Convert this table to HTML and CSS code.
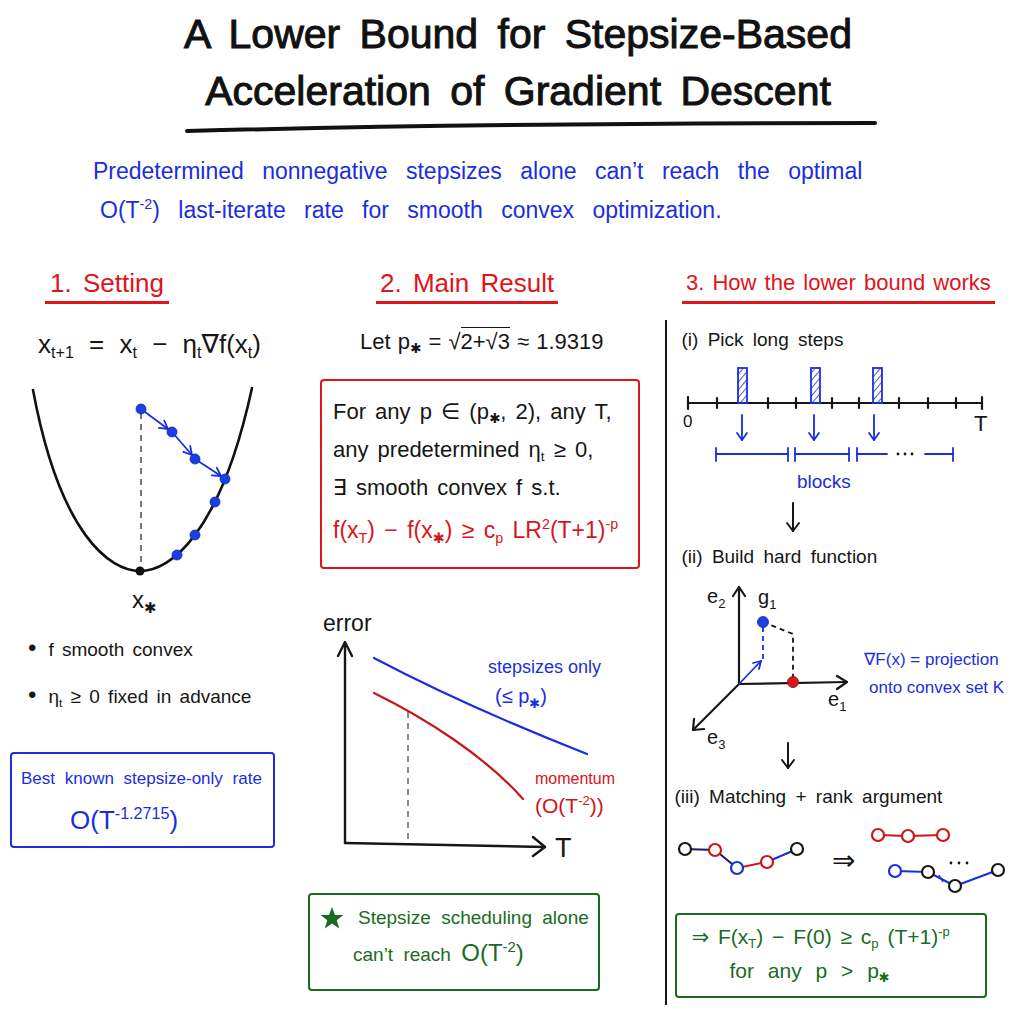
FILE: index.html
```html
<!DOCTYPE html>
<html>
<head>
<meta charset="utf-8">
<title>A Lower Bound for Stepsize-Based Acceleration of Gradient Descent</title>
<link rel="stylesheet" href="styles.css">
</head>
<body>
<div class="page">
  <header class="header">
    <h1 class="title">A Lower Bound for Stepsize-Based<br>Acceleration of Gradient Descent</h1>
    <svg class="title-rule" width="694" height="14" viewBox="0 0 694 14">
      <path d="M2,11 C200,6 450,3 690,3" fill="none" stroke="#111" stroke-width="4" stroke-linecap="round"/>
    </svg>
  </header>

  <p class="lead">Predetermined nonnegative stepsizes alone can’t reach the optimal<br><span class="lead-2">O(T<sup>-2</sup>) last-iterate rate for smooth convex optimization.</span></p>

  <main class="cols">
    <!-- Column 1 -->
    <section class="col">
      <h2 class="heading heading-1">1. Setting</h2>
      <div class="formula">x<sub>t+1</sub> = x<sub>t</sub> − η<sub>t</sub>∇f(x<sub>t</sub>)</div>
      <svg class="bowl" width="260" height="200" viewBox="0 0 260 200">
        <path d="M13,5 C40,150 90,186 120,186 C150,186 200,150 232,3" fill="none" stroke="#111" stroke-width="2.6" stroke-linecap="round"/>
        <line x1="121" y1="28" x2="121" y2="183" stroke="#555" stroke-width="1.6" stroke-dasharray="6 5"/>
        <g stroke="#1a2ee0" stroke-width="1.8" fill="none" stroke-linecap="round" stroke-linejoin="round">
          <line x1="121" y1="24" x2="148" y2="44"/>
          <polyline points="138.9,42.8 148,44 144.3,35.6"/>
          <line x1="152" y1="47" x2="172" y2="70"/>
          <polyline points="163.4,66.8 172,70 170.2,61"/>
          <line x1="175" y1="74" x2="201" y2="91"/>
          <polyline points="191.8,90.3 201,91 196.8,82.8"/>
        </g>
        <g fill="#1b3fe2" stroke="#0d2aa6" stroke-width="0.8">
          <circle cx="121" cy="24" r="5"/>
          <circle cx="152" cy="47" r="5"/>
          <circle cx="175" cy="74" r="5"/>
          <circle cx="205" cy="94" r="5"/>
          <circle cx="195" cy="117" r="5"/>
          <circle cx="175" cy="150" r="5"/>
          <circle cx="157" cy="170" r="5"/>
        </g>
        <circle cx="120" cy="186" r="4.5" fill="#111"/>
      </svg>
      <div class="xstar">x<sub>✱</sub></div>
      <ul class="bullets">
        <li>f smooth convex</li>
        <li>η<sub>t</sub> ≥ 0 fixed in advance</li>
      </ul>
      <div class="box box-blue">
        <div class="box-blue-1">Best known stepsize-only rate</div>
        <div class="box-blue-2">O(T<sup>-1.2715</sup>)</div>
      </div>
    </section>

    <!-- Column 2 -->
    <section class="col">
      <h2 class="heading heading-2">2. Main Result</h2>
      <div class="let">Let p<sub>✱</sub> = <span class="rad">√<span class="rad-body">2+<span class="rad">√<span class="rad-body">3</span></span></span></span> ≈ 1.9319</div>
      <div class="box box-red">
        <div class="line">For any p ∈ (p<sub>✱</sub>, 2), any T,</div>
        <div class="line">any predetermined η<sub>t</sub> ≥ 0,</div>
        <div class="line">∃ smooth convex f s.t.</div>
        <div class="line line-red">f(x<sub>T</sub>) − f(x<sub>✱</sub>) ≥ c<sub>p</sub> LR<sup>2</sup>(T+1)<sup>-p</sup></div>
      </div>
      <svg class="diagram graph" width="310" height="264" viewBox="0 0 310 264">
        <text x="8" y="25" font-size="23" fill="#161616">error</text>
        <g stroke="#161616" stroke-width="2.4" fill="none" stroke-linecap="round" stroke-linejoin="round">
          <line x1="30" y1="237" x2="30" y2="37"/>
          <polyline points="23,50 30,36 37,50"/>
          <line x1="30" y1="237" x2="230" y2="241"/>
          <polyline points="218,231 230,241 218,250"/>
        </g>
        <text x="240" y="251" font-size="27" fill="#161616">T</text>
        <line x1="93" y1="106" x2="93" y2="238" stroke="#666" stroke-width="1.5" stroke-dasharray="6 5"/>
        <path d="M59,52 Q150,100 272,148" fill="none" stroke="#1a2ee0" stroke-width="2.2" stroke-linecap="round"/>
        <path d="M59,87 C110,112 170,150 208,193" fill="none" stroke="#c8141a" stroke-width="2.2" stroke-linecap="round"/>
        <text x="173" y="67" font-size="18" fill="#1a2ee0">stepsizes only</text>
        <text x="180" y="97" font-size="20" fill="#1a2ee0">(≤ p<tspan dy="5" font-size="13">✱</tspan><tspan dy="-5">)</tspan></text>
        <text x="220" y="178" font-size="16" fill="#d0141a">momentum</text>
        <text x="220" y="207" font-size="21" fill="#d0141a">(O(T<tspan dy="-8" font-size="13">-2</tspan><tspan dy="8">))</tspan></text>
      </svg>
      <div class="box box-green box-green-2">
        <div class="g-line g-line-1">
          <svg class="star" width="24" height="24" viewBox="0 0 24 24"><polygon points="12,1 15,9 23.5,9 16.7,14.2 19.3,22.5 12,17.4 4.7,22.5 7.3,14.2 0.5,9 9,9" fill="#1a6b22"/></svg>
          <span>Stepsize scheduling alone</span>
        </div>
        <div class="g-line g-line-2">can’t reach <span class="big">O(T<sup>-2</sup>)</span></div>
      </div>
    </section>

    <!-- Column 3 -->
    <section class="col">
      <h2 class="heading heading-3">3. How the lower bound works</h2>
      <div class="how">
        <div class="step">(i) Pick long steps</div>
        <svg class="diagram timeline" width="320" height="180" viewBox="0 0 320 180">
          <defs>
            <pattern id="hatch" width="5" height="5" patternUnits="userSpaceOnUse" patternTransform="rotate(40)">
              <line x1="0" y1="0" x2="0" y2="5" stroke="#1a2ee0" stroke-width="1.6"/>
            </pattern>
          </defs>
          <g stroke="#161616" stroke-width="2.2" stroke-linecap="round">
            <line x1="6" y1="48" x2="300" y2="48"/>
            <line x1="6" y1="42" x2="6" y2="54"/>
            <line x1="35" y1="43" x2="35" y2="53"/>
            <line x1="86" y1="43" x2="86" y2="53"/>
            <line x1="114" y1="43" x2="114" y2="53"/>
            <line x1="150" y1="43" x2="150" y2="53"/>
            <line x1="177" y1="43" x2="177" y2="53"/>
            <line x1="217" y1="43" x2="217" y2="53"/>
            <line x1="246" y1="43" x2="246" y2="53"/>
            <line x1="274" y1="43" x2="274" y2="53"/>
            <line x1="300" y1="42" x2="300" y2="54"/>
          </g>
          <g fill="url(#hatch)" stroke="#1a2ee0" stroke-width="1.8">
            <rect x="56" y="13" width="9" height="35"/>
            <rect x="129" y="13" width="9" height="35"/>
            <rect x="191" y="13" width="9" height="35"/>
          </g>
          <text x="1" y="72" font-size="17" fill="#161616">0</text>
          <text x="292" y="76" font-size="22" fill="#161616">T</text>
          <g stroke="#1a2ee0" stroke-width="1.8" fill="none" stroke-linecap="round" stroke-linejoin="round">
            <line x1="60" y1="60" x2="60" y2="85"/>
            <polyline points="55,78 60,85 65,78"/>
            <line x1="132" y1="60" x2="132" y2="85"/>
            <polyline points="127,78 132,85 137,78"/>
            <line x1="192" y1="60" x2="192" y2="85"/>
            <polyline points="187,78 192,85 197,78"/>
            <line x1="34" y1="99" x2="106" y2="99"/>
            <line x1="34" y1="93" x2="34" y2="106"/>
            <line x1="106" y1="93" x2="106" y2="106"/>
            <line x1="113" y1="99" x2="167" y2="99"/>
            <line x1="113" y1="93" x2="113" y2="106"/>
            <line x1="167" y1="93" x2="167" y2="106"/>
            <line x1="175" y1="99" x2="205" y2="99"/>
            <line x1="175" y1="93" x2="175" y2="106"/>
            <line x1="243" y1="99" x2="271" y2="99"/>
            <line x1="271" y1="93" x2="271" y2="106"/>
          </g>
          <g fill="#161616">
            <circle cx="216" cy="99" r="1.4"/>
            <circle cx="223" cy="99" r="1.4"/>
            <circle cx="230" cy="99" r="1.4"/>
          </g>
          <text x="115" y="133" font-size="19" fill="#1a2ee0">blocks</text>
          <g stroke="#161616" stroke-width="2" fill="none" stroke-linecap="round" stroke-linejoin="round">
            <line x1="111" y1="148" x2="111" y2="176"/>
            <polyline points="105,168 111,176 117,168"/>
          </g>
        </svg>

        <div class="step step-2">(ii) Build hard function</div>
        <svg class="diagram axes" width="330" height="203" viewBox="0 0 330 203">
          <g stroke="#161616" stroke-width="2.2" fill="none" stroke-linecap="round" stroke-linejoin="round">
            <line x1="57" y1="112" x2="57" y2="15"/>
            <polyline points="51,24 57,15 63,24"/>
            <line x1="57" y1="112" x2="165" y2="110"/>
            <polyline points="155,104 165,110 155,117"/>
            <line x1="57" y1="112" x2="11" y2="158"/>
            <polyline points="22,157 11,158 12,147"/>
          </g>
          <text x="25" y="31" font-size="20" fill="#161616">e<tspan dy="5" font-size="13">2</tspan></text>
          <text x="76" y="32" font-size="20" fill="#161616">g<tspan dy="5" font-size="13">1</tspan></text>
          <text x="146" y="134" font-size="20" fill="#161616">e<tspan dy="5" font-size="13">1</tspan></text>
          <text x="25" y="172" font-size="20" fill="#161616">e<tspan dy="5" font-size="13">3</tspan></text>
          <polyline points="81,50 111,62 111,106" fill="none" stroke="#161616" stroke-width="1.8" stroke-dasharray="5 4"/>
          <line x1="81" y1="55" x2="81" y2="88" stroke="#1a2ee0" stroke-width="1.8" stroke-dasharray="5 4"/>
          <g stroke="#1a2ee0" stroke-width="1.8" fill="none" stroke-linecap="round" stroke-linejoin="round">
            <line x1="57" y1="112" x2="79" y2="89"/>
            <polyline points="71,91 79,89 77,97"/>
          </g>
          <circle cx="81" cy="50" r="5.5" fill="#1b3fe2" stroke="#0d2aa6" stroke-width="0.8"/>
          <circle cx="111" cy="110" r="5.5" fill="#e0141a" stroke="#7a0c0c" stroke-width="0.8"/>
          <text x="182" y="93" font-size="17" fill="#1a2ee0">∇F(x) = projection</text>
          <text x="187" y="121" font-size="17" fill="#1a2ee0">onto convex set K</text>
          <g stroke="#161616" stroke-width="2" fill="none" stroke-linecap="round" stroke-linejoin="round">
            <line x1="106" y1="171" x2="106" y2="196"/>
            <polyline points="100,188 106,196 112,188"/>
          </g>
        </svg>

        <div class="step step-3">(iii) Matching + rank argument</div>
        <svg class="diagram chains" width="340" height="80" viewBox="0 0 340 80">
          <g fill="none" stroke-width="2">
            <line x1="10" y1="34" x2="40" y2="35" stroke="#1c1c55"/>
            <line x1="40" y1="35" x2="62" y2="53" stroke="#1c1c55"/>
            <line x1="62" y1="53" x2="92" y2="47" stroke="#d0141a"/>
            <line x1="92" y1="47" x2="122" y2="34" stroke="#1a2ee0"/>
            <line x1="203" y1="20" x2="233" y2="21" stroke="#d0141a"/>
            <line x1="233" y1="21" x2="268" y2="20" stroke="#d0141a"/>
            <line x1="220" y1="56" x2="253" y2="57" stroke="#1a2ee0"/>
            <line x1="253" y1="57" x2="280" y2="71" stroke="#1a2ee0"/>
            <line x1="280" y1="71" x2="323" y2="55" stroke="#1a2ee0"/>
            <line x1="264" y1="60" x2="268" y2="67" stroke="#1a2ee0" stroke-width="1.4"/>
          </g>
          <g fill="#fff" stroke-width="2.2">
            <circle cx="10" cy="34" r="6" stroke="#161616"/>
            <circle cx="40" cy="35" r="6" stroke="#d0141a"/>
            <circle cx="62" cy="53" r="6" stroke="#1a2ee0"/>
            <circle cx="92" cy="47" r="6" stroke="#d0141a"/>
            <circle cx="122" cy="34" r="6" stroke="#161616"/>
            <circle cx="203" cy="20" r="6" stroke="#d0141a"/>
            <circle cx="233" cy="21" r="6" stroke="#d0141a"/>
            <circle cx="268" cy="20" r="6" stroke="#d0141a"/>
            <circle cx="220" cy="56" r="6" stroke="#1a2ee0"/>
            <circle cx="253" cy="57" r="6" stroke="#161616"/>
            <circle cx="280" cy="71" r="6" stroke="#161616"/>
            <circle cx="323" cy="55" r="6" stroke="#161616"/>
          </g>
          <g fill="#161616">
            <circle cx="276" cy="48" r="1.4"/>
            <circle cx="284" cy="48" r="1.4"/>
            <circle cx="292" cy="48" r="1.4"/>
          </g>
          <text x="157" y="55" font-size="28" fill="#161616">⇒</text>
        </svg>

        <div class="box box-green box-green-3">
          <div class="g-line g-line-3">⇒ F(x<sub>T</sub>) − F(0) ≥ c<sub>p</sub> (T+1)<sup>-p</sup></div>
          <div class="g-line g-line-4">for any p &gt; p<sub>✱</sub></div>
        </div>
      </div>
    </section>
  </main>
</div>
</body>
</html>
```

FILE: styles.css
```css
* {
  box-sizing: border-box;
}

html,
body {
  margin: 0;
  padding: 0;
  background: #ffffff;
}

body {
  font-family: "Liberation Sans", Arial, "DejaVu Sans", sans-serif;
  color: #161616;
}

.page {
  width: 1024px;
  height: 1024px;
  overflow: hidden;
}

sub,
sup {
  line-height: 0;
  font-size: 0.62em;
}

sub {
  vertical-align: -0.32em;
}

sup {
  vertical-align: 0.6em;
}

/* Header */
.header {
  display: flex;
  flex-direction: column;
}

.title {
  margin: 0;
  padding: 6px 0 0 12px;
  font-size: 41px;
  line-height: 57px;
  font-weight: 400;
  text-align: center;
  word-spacing: 8px;
  color: #111111;
  -webkit-text-stroke: 1px #111111;
}

.title-rule {
  display: block;
  margin-left: 185px;
}

.lead {
  margin: 18px 0 0;
  padding-left: 93px;
  font-size: 23px;
  line-height: 39px;
  word-spacing: 12px;
  color: #1a2ee0;
}

.lead-2 {
  padding-left: 7px;
}

/* Columns */
.cols {
  display: grid;
  grid-template-columns: 300px 365px 359px;
}

.col {
  display: flex;
  flex-direction: column;
  align-items: flex-start;
}

.heading {
  margin: 37px 0 0;
  padding: 0 5px 2px;
  font-size: 26px;
  line-height: 32px;
  font-weight: 400;
  color: #e0141a;
  border-bottom: 3px solid #e0141a;
  word-spacing: 4px;
}

.heading-1 {
  margin-left: 45px;
}

.heading-2 {
  margin-left: 76px;
  padding: 0 4px 2px;
}

.heading-3 {
  margin-left: 17px;
  padding: 0 4px 2px;
  font-size: 22px;
  word-spacing: 2px;
}

/* Column 1 */
.formula {
  margin: 22px 0 0 38px;
  font-size: 26px;
  line-height: 36px;
  word-spacing: 8px;
}

.bowl {
  display: block;
  margin: 23px 0 0 20px;
}

.xstar {
  margin: 1px 0 0 132px;
  font-size: 24px;
  line-height: 28px;
}

.bullets {
  list-style: none;
  margin: 21px 0 0;
  padding: 0 0 0 28px;
  font-size: 19px;
  line-height: 30px;
  word-spacing: 3px;
}

.bullets li + li {
  margin-top: 17px;
}

.bullets li::before {
  content: "•";
  font-size: 24px;
  line-height: 0;
  margin-right: 12px;
}

.box {
  border-width: 2.5px;
  border-style: solid;
  border-radius: 4px;
}

.box-blue {
  margin: 40px 0 0 10px;
  width: 265px;
  height: 96px;
  padding: 10px 0 0 9px;
  border-color: #1a2ee0;
  color: #1a2ee0;
}

.box-blue-1 {
  font-size: 17px;
  line-height: 30px;
  word-spacing: 5px;
}

.box-blue-2 {
  padding: 8px 0 0 49px;
  font-size: 26px;
  line-height: 36px;
}

/* Column 2 */
.let {
  margin: 22px 0 0 60px;
  font-size: 22px;
  line-height: 32px;
  word-spacing: 1px;
}

.rad-body {
  border-top: 1.5px solid currentColor;
  padding-top: 1px;
}

.box-red {
  margin: 21px 0 0 20px;
  width: 320px;
  height: 190px;
  padding: 12px 0 0 11px;
  border-color: #e0141a;
}

.box-red .line {
  font-size: 22px;
  line-height: 38px;
  word-spacing: 3px;
}

.box-red .line-red {
  margin-top: 4px;
  color: #d8141a;
  font-size: 23px;
  word-spacing: 3px;
}

.diagram text {
  font-family: "Liberation Sans", Arial, "DejaVu Sans", sans-serif;
}

.graph {
  display: block;
  margin: 37px 0 0 15px;
}

.box-green {
  border-color: #1a6b22;
  color: #1a6b22;
}

.box-green-2 {
  margin: 23px 0 0 8px;
  width: 292px;
  height: 98px;
  padding: 8px 0 0 10px;
}

.g-line {
  font-size: 19px;
  word-spacing: 5px;
}

.g-line-1 {
  display: flex;
  align-items: center;
  gap: 14px;
  height: 30px;
}

.star {
  display: block;
  flex: none;
}

.g-line-2 {
  padding-left: 33px;
  line-height: 40px;
}

.big {
  font-size: 24px;
}

/* Column 3 */
.how {
  margin-top: 16px;
  height: 685px;
  border-left: 2.5px solid #161616;
  padding: 5px 0 0 14.5px;
  display: flex;
  flex-direction: column;
  align-items: flex-start;
}

.step {
  font-size: 19px;
  line-height: 30px;
  word-spacing: 4px;
}

.step-2 {
  margin-top: 7px;
}

.step-3 {
  margin: 7px 0 0 -7px;
}

.timeline,
.axes {
  display: block;
}

.chains {
  display: block;
  margin: 3px 0 0 -7px;
}

.box-green-3 {
  margin: 18px 0 0 -7px;
  width: 312px;
  height: 85px;
  padding: 6px 0 0 15px;
}

.g-line-3 {
  font-size: 21px;
  line-height: 32px;
  word-spacing: 3px;
}

.g-line-4 {
  padding-left: 38px;
  font-size: 21px;
  line-height: 36px;
  word-spacing: 8px;
}
```
